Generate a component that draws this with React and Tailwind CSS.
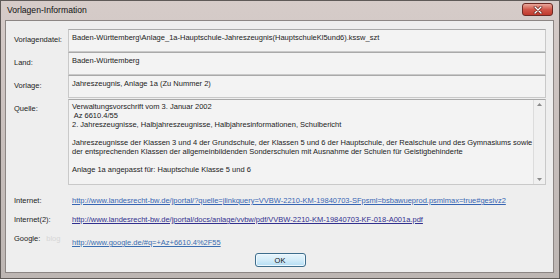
import React from 'react'

const font = { fontFamily: '"Liberation Sans", Arial, sans-serif' }

const Field = ({ label, children, className = '' }) => (
  <div className="flex">
    <div className="w-[54px] pt-[6px] text-[7.5px] leading-[9px] text-[#1c1c1c]">{label}</div>
    <div className={`flex-1 border border-[#c9c9c9] border-t-[#a9a9a9] bg-[#f3f3f3] pl-[3px] pt-[3px] text-[7.5px] leading-[9px] text-[#1c1c1c] ${className}`}>
      {children}
    </div>
  </div>
)

const LinkRow = ({ label, href, color, extra, linkPad = 'pt-[5px]' }) => (
  <div className="flex h-[19px]">
    <div className="w-[58px] pt-[5px] text-[7.5px] leading-[9px] text-[#1c1c1c] whitespace-nowrap">
      {label}
      {extra}
    </div>
    <div className={`flex-1 ${linkPad} text-[7.5px] leading-[9px] whitespace-nowrap`}>
      <a href={href} className={`underline ${color}`}>{href}</a>
    </div>
  </div>
)

const App = () => {
  const quelle = [
    'Verwaltungsvorschrift vom 3. Januar 2002',
    ' Az 6610.4/55',
    '2. Jahreszeugnisse, Halbjahreszeugnisse, Halbjahresinformationen, Schulbericht',
    '',
    'Jahreszeugnisse der Klassen 3 und 4 der Grundschule, der Klassen 5 und 6 der Hauptschule, der Realschule und des Gymnasiums sowie',
    'der entsprechenden Klassen der allgemeinbildenden Sonderschulen mit Ausnahme der Schulen für Geistigbehinderte',
    '',
    'Anlage 1a angepasst für: Hauptschule Klasse 5 und 6',
  ]

  return (
    <div style={font} className="w-[560px] h-[279px] flex flex-col border border-[#5f5a58] bg-gradient-to-b from-[#d6ccc9] via-[#c8bfbc] to-[#bdb6b3] pl-[4px] pr-[5px] pb-[5px]">
      {/* title bar */}
      <div className="h-[19px] flex items-start justify-between">
        <span className="pl-[2px] pt-[4px] text-[8.6px] leading-[11px] text-[#111]">Vorlagen-Information</span>
        <div className="mt-[2px] mr-[1px] w-[31px] h-[13px] rounded-[3px] border border-[#6d2a24] bg-gradient-to-b from-[#e8a89c] via-[#d0574a] to-[#c0392d] flex items-center justify-center">
          <svg width="10" height="8" viewBox="0 0 10 8">
            <path d="M2 1 L8 7 M8 1 L2 7" stroke="#5a1a14" strokeWidth="2.6" strokeLinecap="round" />
            <path d="M2 1 L8 7 M8 1 L2 7" stroke="#ffffff" strokeWidth="1.4" strokeLinecap="round" />
          </svg>
        </div>
      </div>

      {/* client area */}
      <div className="flex-1 border border-[#8c8684] bg-[#eeeeee] pl-[8px] pr-[7px] pt-[8px] flex flex-col">
        <Field label="Vorlagendatei:" className="h-[23px]">
          {'Baden-Württemberg\\Anlage_1a-Hauptschule-Jahreszeugnis(HauptschuleKl5und6).kssw_szt'}
        </Field>
        <Field label="Land:" className="h-[23px]">Baden-Württemberg</Field>
        <Field label="Vorlage:" className="h-[23px]">Jahreszeugnis, Anlage 1a (Zu Nummer 2)</Field>

        <div className="flex mt-[1px]">
          <div className="w-[54px] pt-[5px] text-[7.5px] leading-[9px] text-[#1c1c1c]">Quelle:</div>
          <div className="flex-1 h-[86px] flex border border-[#c9c9c9] border-t-[#a9a9a9] bg-[#f3f3f3]">
            <div className="flex-1 pl-[3px] pt-[2px] text-[7.5px] leading-[9px] text-[#1c1c1c]">
              {quelle.map((line, i) => (
                <div key={i} className="h-[9px] whitespace-pre">{line}</div>
              ))}
            </div>
            <div className="w-[12px] border-l border-[#dcdcdc] bg-[#f0f0f0] flex flex-col items-center justify-between py-[3px]">
              <svg width="5" height="3" viewBox="0 0 5 3"><path d="M0 3 L2.5 0 L5 3 Z" fill="#8a8a8a" /></svg>
              <svg width="5" height="3" viewBox="0 0 5 3"><path d="M0 0 L2.5 3 L5 0 Z" fill="#8a8a8a" /></svg>
            </div>
          </div>
        </div>

        <div className="mt-[6px] flex flex-col">
          <LinkRow
            label="Internet:"
            href="http://www.landesrecht-bw.de/jportal/?quelle=jlinkquery=VVBW-2210-KM-19840703-SFpsml=bsbawueprod.psmlmax=true#gesivz2"
            color="text-[#3765b3]"
          />
          <LinkRow
            label="Internet(2):"
            href="http://www.landesrecht-bw.de/jportal/docs/anlage/vvbw/pdf/VVBW-2210-KM-19840703-KF-018-A001a.pdf"
            color="text-[#32308f]"
          />
          <LinkRow
            label="Google:"
            href="http://www.google.de/#q=+Az+6610.4%2F55"
            color="text-[#3a6db0]"
            linkPad="pt-[9px]"
            extra={<span className="ml-[6px] text-[#d6d6d6]">blog</span>}
          />
        </div>

        <div className="mt-[5px] flex justify-center">
          <button className="w-[51px] h-[14px] rounded-[3px] border border-[#3d6d8c] bg-gradient-to-b from-[#e8f5fc] via-[#d3ecf9] to-[#b2dcf3] shadow-[inset_0_0_0_1px_#eef8fe] text-[7.5px] leading-[9px] text-[#111]">
            OK
          </button>
        </div>
      </div>
    </div>
  )
}

export default App
